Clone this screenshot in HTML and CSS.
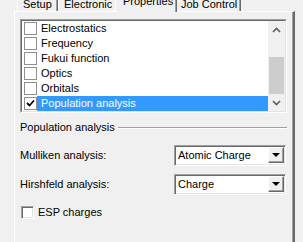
FILE: index.html
```html
<!DOCTYPE html>
<html lang="en">
<head>
  <meta charset="UTF-8">
  <title>Properties</title>
  <link rel="stylesheet" href="styles.css">
</head>
<body>
  <div class="window">
    <!-- Вкладки -->
    <div class="tabs">
      <div class="tab tab-setup">Setup</div>
      <div class="tab tab-electronic">Electronic</div>
      <div class="tab tab-properties active">Properties</div>
      <div class="tab tab-job">Job Control</div>
    </div>

    <div class="panel">
      <!-- Список свойств -->
      <div class="listbox">
        <div class="listbox-inner">
          <ul class="items">
            <li class="item"><span class="flat-box"></span><span class="label">Electrostatics</span></li>
            <li class="item"><span class="flat-box"></span><span class="label">Frequency</span></li>
            <li class="item"><span class="flat-box"></span><span class="label">Fukui function</span></li>
            <li class="item"><span class="flat-box"></span><span class="label">Optics</span></li>
            <li class="item"><span class="flat-box"></span><span class="label">Orbitals</span></li>
            <li class="item selected">
              <span class="flat-box">
                <svg width="11" height="11" viewBox="0 0 11 11"><polyline points="2,5 4.5,7.5 9,2.5" fill="none" stroke="#000" stroke-width="1.8"/></svg>
              </span>
              <span class="label">Population analysis</span>
            </li>
          </ul>
          <div class="scrollbar">
            <div class="arrow">
              <svg width="9" height="6" viewBox="0 0 9 6"><polyline points="1,5 4.5,1.5 8,5" fill="none" stroke="#606060" stroke-width="1.7"/></svg>
            </div>
            <div class="track"><div class="thumb"></div></div>
            <div class="arrow">
              <svg width="9" height="6" viewBox="0 0 9 6"><polyline points="1,1 4.5,4.5 8,1" fill="none" stroke="#606060" stroke-width="1.7"/></svg>
            </div>
          </div>
        </div>
      </div>

      <!-- Анализ заселённостей -->
      <div class="group-title">
        <span>Population analysis</span>
        <span class="rule"></span>
      </div>

      <div class="field">
        <span>Mulliken analysis:</span>
        <div class="combo">
          <span class="combo-value">Atomic Charge</span>
          <span class="combo-button"><span class="triangle"></span></span>
        </div>
      </div>

      <div class="field">
        <span>Hirshfeld analysis:</span>
        <div class="combo">
          <span class="combo-value">Charge</span>
          <span class="combo-button"><span class="triangle"></span></span>
        </div>
      </div>

      <div class="check">
        <span class="sunken-box"></span>
        <span>ESP charges</span>
      </div>
    </div>
  </div>
</body>
</html>
```

FILE: styles.css
```css
/* Основные стили */
* {
  box-sizing: border-box;
}

body {
  margin: 0;
  height: 242px;
  overflow: hidden;
  background: #f0f0f0;
  font: 11px/13px "Liberation Sans", Arial, sans-serif;
  color: #000;
}

.window {
  display: flow-root;
  padding-left: 14px;
}

/* Вкладки */
.tabs {
  display: flex;
  align-items: flex-end;
  height: 18px;
  margin: -7px 0 0 3px;
  position: relative;
  z-index: 1;
}

.tab {
  height: 18px;
  padding: 4px 0 0 5px;
  border-top: 1px solid #fff;
  border-left: 1px solid #fff;
  border-right: 1px solid #696969;
  box-shadow: inset -1px 0 #a0a0a0;
  background: #f0f0f0;
  white-space: nowrap;
}

.tab-setup { width: 41px; }
.tab-electronic { width: 59px; }
.tab-job { width: 66px; }

.tab.active {
  width: 62px;
  height: 21px;
  margin: 0 -2px -1px;
  padding: 3px 0 0 7px;
  position: relative;
  z-index: 2;
}

.panel {
  width: 281px;
  height: 240px;
  padding: 7px 6px 0 5px;
  border-top: 1px solid #fff;
  border-left: 1px solid #fff;
  border-right: 2px solid #696969;
  box-shadow: inset -1px 0 #a0a0a0;
}

/* Список */
.listbox {
  height: 94px;
  border: 1px solid;
  border-color: #a0a0a0 #fff #fff #a0a0a0;
}

.listbox-inner {
  display: flex;
  height: 100%;
  border: 1px solid;
  border-color: #696969 #e3e3e3 #e3e3e3 #696969;
  background: #fff;
}

.items {
  flex: 1;
  margin: 0;
  padding: 0;
  list-style: none;
}

.item {
  display: flex;
  align-items: center;
  height: 15px;
  padding-left: 2px;
}

.flat-box {
  width: 13px;
  height: 13px;
  border: 1px solid #8e8f8f;
  background: #fff;
  display: flex;
  align-items: center;
  justify-content: center;
}

.label {
  flex: 1;
  height: 15px;
  padding: 1px 4px 0;
}

.item.selected .label {
  background: #3399ff;
  color: #fff;
}

.scrollbar {
  width: 17px;
  display: flex;
  flex-direction: column;
  background: #f0f0f0;
}

.arrow {
  height: 17px;
  display: flex;
  align-items: center;
  justify-content: center;
}

.track {
  flex: 1;
  display: flex;
  align-items: flex-end;
  padding: 0 1px;
}

.thumb {
  width: 100%;
  height: 37px;
  background: #cdcdcd;
}

/* Группа */
.group-title {
  display: flex;
  align-items: center;
  gap: 3px;
  margin-top: 8px;
}

.rule {
  flex: 1;
  border-top: 1px solid #a0a0a0;
  border-bottom: 1px solid #fff;
}

.field {
  display: flex;
  align-items: center;
  justify-content: space-between;
  height: 21px;
  margin-top: 11px;
  padding-right: 1px;
}

.field + .field {
  margin-top: 8px;
}

.combo {
  width: 112px;
  height: 21px;
  display: flex;
  border: 1px solid;
  border-color: #a0a0a0 #fff #fff #a0a0a0;
  box-shadow: inset 1px 1px #696969, inset -1px -1px #e3e3e3;
  background: #fff;
  padding: 1px 1px 2px 2px;
}

.combo-value {
  flex: 1;
  padding: 2px 0 0 1px;
}

.combo-button {
  width: 16px;
  display: flex;
  align-items: center;
  justify-content: center;
  background: #f0f0f0;
  border: 1px solid;
  border-color: #fff #696969 #696969 #fff;
  box-shadow: inset -1px -1px #a0a0a0;
}

.triangle {
  width: 0;
  height: 0;
  border-left: 4px solid transparent;
  border-right: 4px solid transparent;
  border-top: 4px solid #000;
}

.check {
  display: flex;
  align-items: center;
  gap: 4px;
  margin: 11px 0 0 1px;
}

.sunken-box {
  width: 13px;
  height: 13px;
  border: 1px solid;
  border-color: #a0a0a0 #fff #fff #a0a0a0;
  box-shadow: inset 1px 1px #696969, inset -1px -1px #e3e3e3;
  background: #fff;
}
```
